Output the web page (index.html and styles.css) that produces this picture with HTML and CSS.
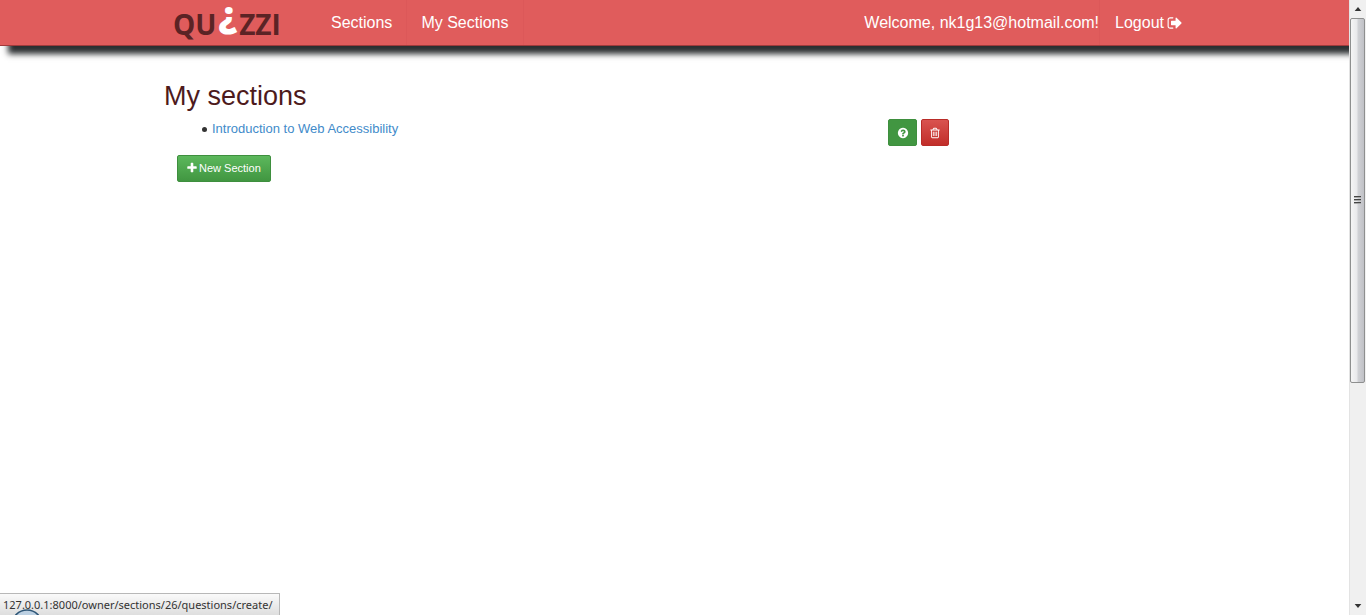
FILE: index.html
```html
<!DOCTYPE html>
<html lang="en">
<head>
<meta charset="utf-8">
<title>Quizzi - My sections</title>
<link rel="stylesheet" href="styles.css">
</head>
<body>
<div class="viewport">
  <header class="navbar">
    <div class="container navbar-inner">
      <a class="brand" href="#"><span>QU</span><span class="brand-mark">¿</span><span>ZZI</span></a>
      <nav class="nav">
        <a href="#">Sections</a>
        <a href="#">My Sections</a>
      </nav>
      <div class="account">
        <span class="welcome">Welcome, nk1g13@hotmail.com!</span>
        <a class="logout" href="#">Logout
          <svg class="icon-nav" viewBox="0 0 1792 1792" aria-hidden="true"><path d="M704 1440q0 4 1 20t.5 26.5-3 23.5-10 19.5-20.5 6.5h-320q-119 0-203.5-84.5t-84.5-203.5v-704q0-119 84.5-203.5t203.5-84.5h320q13 0 22.5 9.500t9.500 22.500q0 4 1 20t.5 26.500-3 23.500-10 19.500-20.500 6.500h-320q-66 0-113 47t-47 113v704q0 66 47 113t113 47h312l11.500 1 11.500 3 8 5.500 7 9 2 13.500zm928-544q0 26-19 45l-544 544q-19 19-45 19t-45-19-19-45v-288h-448q-26 0-45-19t-19-45v-384q0-26 19-45t45-19h448v-288q0-26 19-45t45-19 45 19l544 544q19 19 19 45z"/></svg>
        </a>
      </div>
    </div>
  </header>
  <main class="container content">
    <h1>My sections</h1>
    <ul class="sections">
      <li class="section-row">
        <a class="section-link" href="#">Introduction to Web Accessibility</a>
        <div class="actions">
          <button class="btn btn-question" type="button" aria-label="Add question">
            <svg class="icon" viewBox="0 0 1792 1792" aria-hidden="true"><path d="M1024 1376v-192q0-14-9-23t-23-9h-192q-14 0-23 9t-9 23v192q0 14 9 23t23 9h192q14 0 23-9t9-23zm256-672q0-88-55.5-163t-138.5-116-170-41q-243 0-371 213-15 24 8 42l132 100q7 6 19 6 16 0 25-12 53-68 86-92 34-24 86-24 48 0 85.5 26t37.5 59q0 38-20 61t-68 45q-63 28-115.5 86.5t-52.5 125.5v36q0 14 9 23t23 9h192q14 0 23-9t9-23q0-19 21.5-49.5t54.5-49.5q32-18 49-28.5t46-35 44.5-48 28-60.5 12.5-81zm384 192q0 209-103 385.5t-279.5 279.5-385.5 103-385.5-103-279.5-279.5-103-385.5 103-385.5 279.5-279.5 385.5-103 385.5 103 279.5 279.5 103 385.5z"/></svg>
          </button>
          <button class="btn btn-danger" type="button" aria-label="Delete section">
            <svg class="icon" viewBox="0 0 1792 1792" aria-hidden="true"><path d="M704 736v576q0 14-9 23t-23 9h-64q-14 0-23-9t-9-23v-576q0-14 9-23t23-9h64q14 0 23 9t9 23zm256 0v576q0 14-9 23t-23 9h-64q-14 0-23-9t-9-23v-576q0-14 9-23t23-9h64q14 0 23 9t9 23zm256 0v576q0 14-9 23t-23 9h-64q-14 0-23-9t-9-23v-576q0-14 9-23t23-9h64q14 0 23 9t9 23zm128 724v-948h-896v948q0 22 7 40.5t14.5 27 10.500 8.500h832q3 0 10.500-8.500t14.500-27 7-40.500zm-672-1076h448l-48-117q-7-9-17-11h-317q-10 2-17 11zm928 32v64q0 14-9 23t-23 9h-96v948q0 83-47 143.500t-113 60.500h-832q-66 0-113-58.500t-47-141.500v-952h-96q-14 0-23-9t-9-23v-64q0-14 9-23t23-9h309l70-167q15-37 54-63t79-26h320q40 0 79 26t54 63l70 167h309q14 0 23 9t9 23z"/></svg>
          </button>
        </div>
      </li>
    </ul>
    <button class="btn btn-new" type="button">
      <svg class="icon" viewBox="0 0 1792 1792" aria-hidden="true"><path d="M1600 736v192q0 40-28 68t-68 28h-416v416q0 40-28 68t-68 28h-192q-40 0-68-28t-28-68v-416h-416q-40 0-68-28t-28-68v-192q0-40 28-68t68-28h416v-416q0-40 28-68t68-28h192q40 0 68 28t28 68v416h416q40 0 68 28t28 68z"/></svg>
      New Section
    </button>
  </main>
</div>
<div class="scrollbar" aria-hidden="true">
  <svg class="arrow" viewBox="0 0 17 18"><path d="M5 11h7l-3.500-4z"/></svg>
  <div class="track">
    <div class="thumb"><span class="grip"></span><span class="grip"></span><span class="grip"></span></div>
  </div>
  <svg class="arrow" viewBox="0 0 17 18"><path d="M5 7h7l-3.500 4z"/></svg>
</div>
<div class="status">127.0.0.1:8000/owner/sections/26/questions/create/
  <svg class="orb" viewBox="0 0 30 6" aria-hidden="true"><circle cx="15" cy="16" r="15" fill="#bcd0e2" stroke="#2d5576" stroke-width="1.500"/></svg>
</div>
</body>
</html>
```
FILE: styles.css
```css
* {
  box-sizing: border-box;
}

body {
  margin: 0;
  display: flex;
  min-height: 100vh;
  background: #fff;
  color: #333;
  font: 13px/20px "Liberation Sans", Arial, sans-serif;
}

a {
  text-decoration: none;
}

.viewport {
  flex: 1;
  min-width: 0;
  overflow: hidden;
}

.container {
  width: 80%;
  max-width: 1021px;
  margin: 0 auto;
}

.navbar {
  background: #e05c5c;
  border-bottom: 1px solid #9f3a3b;
  box-shadow: 8px 8px 6px #2b2f31;
}

.navbar-inner {
  display: flex;
  height: 45px;
  font-size: 16px;
  line-height: 45px;
}

.navbar a,
.welcome {
  color: #fff;
}

.navbar .brand {
  display: flex;
  width: 153px;
  padding-left: 9px;
  color: #5b2325;
  font: 700 28px/48px "Open Sans", sans-serif;
}

.navbar .brand-mark {
  margin: 0 2px;
  color: #fff;
  font-size: 37px;
  font-weight: 800;
  line-height: 28px;
}

.nav {
  display: flex;
}

.nav a {
  padding: 0 14px;
  border-right: 1px solid #dc5859;
}

.account {
  display: flex;
  margin-left: auto;
  padding-right: 2px;
}

.welcome {
  border-right: 1px solid #dc5859;
}

.logout {
  display: flex;
  align-items: center;
  gap: 3px;
  padding-left: 15px;
}

.icon-nav {
  width: 16px;
  height: 16px;
  fill: #fff;
}

.content {
  padding-top: 35px;
}

h1 {
  margin: 0;
  color: #4d1a1c;
  font-size: 27px;
  font-weight: 400;
  line-height: 30px;
}

.sections {
  margin: 8px 0 9px;
  padding-left: 38px;
  list-style: none;
}

.section-row {
  display: flex;
  width: 76%;
  min-height: 27px;
}

.section-row::before {
  content: "";
  flex: none;
  width: 5px;
  height: 5px;
  margin: 8px 5px 0 0;
  border-radius: 50%;
  background: #333;
}

.section-link {
  color: #428bca;
}

.actions {
  display: flex;
  gap: 4px;
  margin-left: auto;
}

.btn {
  display: flex;
  align-items: center;
  justify-content: center;
  gap: 1px;
  height: 27px;
  min-width: 28px;
  padding: 0;
  border: 1px solid #3e8f3e;
  border-radius: 2px;
  background: linear-gradient(#5cb85c, #419641);
  color: #fff;
  font: 11px/16px "Liberation Sans", Arial, sans-serif;
}

.btn-question {
  min-width: 29px;
  background: #419641;
}

.btn-danger {
  border-color: #b92c28;
  background: linear-gradient(#d9534f, #c12e2a);
}

.btn-new {
  margin-left: 13px;
  padding: 0 9px 1px 8px;
}

.icon {
  width: 12px;
  height: 12px;
  fill: #fff;
}

.scrollbar {
  display: flex;
  flex-direction: column;
  width: 17px;
  border-left: 1px solid #e3e3e3;
  background: #f0f0f0;
}

.arrow {
  height: 18px;
  fill: #333;
}

.track {
  flex: 1;
}

.thumb {
  display: flex;
  flex-direction: column;
  align-items: center;
  justify-content: center;
  gap: 1px;
  height: 63%;
  margin-right: 1px;
  border: 1px solid #8e8f8f;
  border-radius: 2px;
  background: linear-gradient(to right, #f5f5f5, #e9e9eb 45%, #d0d1d5 55%, #c0c1c6);
}

.grip {
  width: 7px;
  height: 2px;
  border-top: 1px solid #444;
  background: #aaa;
}

.status {
  position: fixed;
  bottom: 0;
  left: 0;
  padding: 0 7px 0 3px;
  border: solid #b8b8b8;
  border-width: 1px 1px 0 0;
  background: linear-gradient(#fafafa, #dedede);
  font: 11px/21px "Noto Sans", sans-serif;
}

.orb {
  position: absolute;
  bottom: 0;
  left: 12px;
  width: 30px;
  height: 6px;
}
```
